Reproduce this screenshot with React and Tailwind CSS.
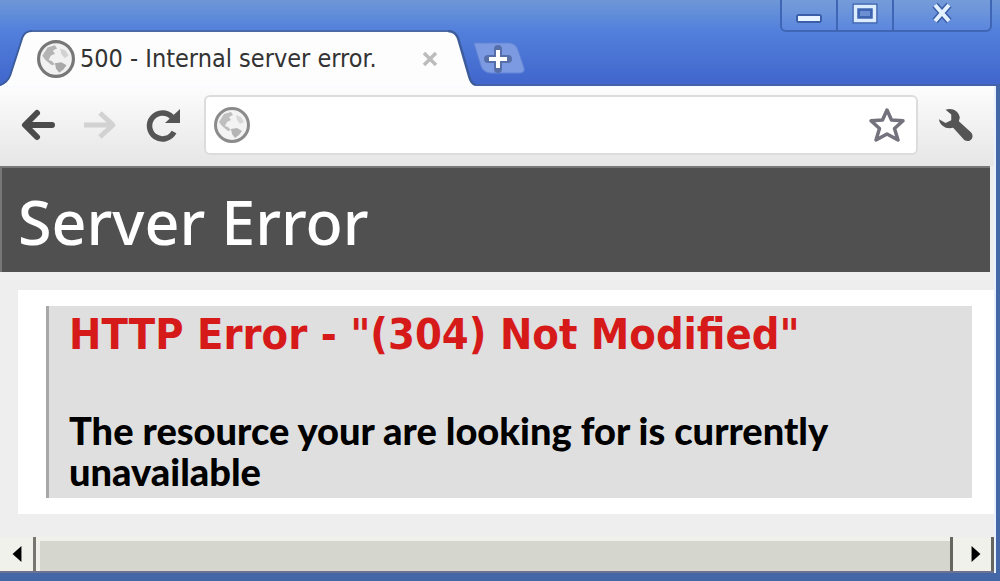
import React from 'react';

// Small globe used for the tab favicon and in the address bar
function GlobeIcon({ className }) {
  return (
    <svg viewBox="0 0 36 36" className={className} aria-hidden="true">
      <circle cx="18" cy="18" r="16.5" fill="#f1f1f1" stroke="#777777" strokeWidth="3" />
      <path
        d="M10 7 L17 5 L19 8 L15 10 L17 13 L13 15 L11 19 L14 20 L17 23 L14 24 L8 19 L5 15 Z"
        fill="#b4b4b4"
      />
      <path d="M22 8 L27 10 L30 15 L26 17 L23 13 Z" fill="#d2d2d2" />
      <path d="M17 22 L23 21 L28 24 L25 28 L21 31 L18 27 Z" fill="#a9a9a9" />
    </svg>
  );
}

function WindowControls() {
  const buttonClass = 'flex items-center justify-center h-full pb-1';

  return (
    <div className="flex h-8 mr-2 rounded-b-md border-2 border-t-0 border-[#3f66b4] divide-x-2 divide-[#3f66b4] bg-white/5">
      <button type="button" aria-label="Minimize" className={`${buttonClass} w-14`}>
        <svg viewBox="0 0 28 24" className="w-7 h-6">
          <rect x="1" y="13" width="26" height="9" rx="3" fill="#3b5ea8" />
          <rect x="3" y="15" width="22" height="5" fill="#e8f4ff" />
        </svg>
      </button>
      <button type="button" aria-label="Maximize" className={`${buttonClass} w-14`}>
        <svg viewBox="0 0 28 24" className="w-7 h-6">
          <rect x="4.5" y="5.5" width="19" height="14" fill="none" stroke="#3b5ea8" strokeWidth="6" />
          <rect x="4.5" y="5.5" width="19" height="14" fill="#3f64b0" stroke="#dcecff" strokeWidth="3.5" />
          <rect x="9" y="10" width="10" height="5" fill="#6b8fd2" />
        </svg>
      </button>
      <button type="button" aria-label="Close" className={`${buttonClass} w-24`}>
        <svg viewBox="0 0 28 24" className="w-7 h-6">
          <path d="M7 4 L21 20 M21 4 L7 20" stroke="#3b5ea8" strokeWidth="7" />
          <path d="M7 4 L21 20 M21 4 L7 20" stroke="#e4f2ff" strokeWidth="4" />
        </svg>
      </button>
    </div>
  );
}

function Tab({ title }) {
  return (
    <div className="flex h-14">
      <svg viewBox="0 0 34 56" className="w-8 h-14 shrink-0" preserveAspectRatio="none" aria-hidden="true">
        <path d="M0 56 C6 54 9 51 11 46 L24 8 Q27 1 34 1 L34 56 Z" fill="#fdfdfe" />
        <path d="M0 55 C6 53 9 50 11 45 L24 7 Q27 1 34 1" fill="none" stroke="#3d5c9c" strokeWidth="2" />
      </svg>
      <div className="flex items-center w-[416px] pl-1 pr-2 border-t-2 border-[#4a6aaa] bg-[#fdfdfe]">
        <GlobeIcon className="w-10 h-10 shrink-0 px-px" />
        <span className="ml-1 text-[25px] text-[#333333] whitespace-nowrap">{title}</span>
        <button type="button" aria-label="Close tab" className="ml-auto">
          <svg viewBox="0 0 20 20" className="w-5 h-5">
            <path d="M4 4 L16 16 M16 4 L4 16" stroke="#bcbcbc" strokeWidth="3.5" />
          </svg>
        </button>
      </div>
      <svg viewBox="0 0 28 56" className="w-7 h-14 shrink-0" aria-hidden="true">
        <path d="M0 1 Q7 1 10 8 L21 46 Q23 54 28 55 L28 56 L0 56 Z" fill="#fdfdfe" />
        <path d="M0 1 Q7 1 10 8 L21 46 Q23 54 28 55" fill="none" stroke="#3d5c9c" strokeWidth="2.5" />
      </svg>
    </div>
  );
}

function TitleBar() {
  return (
    <header className="flex bg-linear-to-b from-[#6e97d6] via-[#5380dc] via-35% to-[#4065cc]">
      <div className="pt-[30px]">
        <Tab title="500 - Internal server error." />
      </div>
      <div className="flex flex-1 items-start justify-between border-b-2 border-[#4562a8]">
        <button type="button" aria-label="New tab" className="-ml-1 mt-[42px]">
          <svg viewBox="0 0 54 32" className="w-[54px] h-8">
            <path d="M2 1 L38 1 Q44 2 46 8 L52 26 Q53 31 48 31 L18 31 Q11 30 9 24 Z" fill="#7b9ae2" stroke="#6384d6" />
            <path d="M26 7 V27 M16 17 H36" stroke="#566fa8" strokeWidth="8" strokeLinecap="round" />
            <path d="M26 8 V26 M17 17 H35" stroke="#ffffff" strokeWidth="4" />
          </svg>
        </button>
        <WindowControls />
      </div>
    </header>
  );
}

function Toolbar() {
  return (
    <nav className="flex items-center gap-3 h-20 pl-4 pr-5 pb-1 border-t-2 border-[#fafbff] bg-linear-to-b from-[#fcfcfc] to-[#e6e6e6]">
      <div className="flex items-center gap-6 mr-3">
        <button type="button" aria-label="Back">
          <svg viewBox="0 0 40 36" className="w-10 h-9">
            <path d="M36 18 H10 M21 6 L9 18 L21 30" fill="none" stroke="#4b4b4b" strokeWidth="6" strokeLinecap="round" strokeLinejoin="round" />
          </svg>
        </button>
        <button type="button" aria-label="Forward" disabled>
          <svg viewBox="0 0 40 36" className="w-10 h-9">
            <path d="M4 18 H30 M20 6 L33 18 L20 30" fill="none" stroke="#d2d2d2" strokeWidth="5" strokeLinejoin="round" />
          </svg>
        </button>
        <button type="button" aria-label="Reload">
          <svg viewBox="0 0 36 36" className="w-9 h-9">
            <path d="M28 10 A13 13 0 1 0 30 25" fill="none" stroke="#555555" strokeWidth="5.5" />
            <path d="M36 2 V16 H21 Z" fill="#555555" />
          </svg>
        </button>
      </div>
      <div className="flex items-center flex-1 h-15 px-2 rounded-md border-2 border-[#dcdcdc] bg-white">
        <GlobeIcon className="w-9 h-9 shrink-0 opacity-85" />
        <input type="text" aria-label="Address" className="flex-1 min-w-0 h-full px-3 text-2xl outline-none" />
        <button type="button" aria-label="Bookmark this page">
          <svg viewBox="0 0 40 40" className="w-10 h-10">
            <path
              d="M19 5 L23.5 15 L35 15.800 L26.500 23.500 L30 35 L19 29 L8 35 L11.500 23.500 L3 15.800 L14.500 15 Z"
              fill="#ffffff"
              stroke="#74727c"
              strokeWidth="3.5"
              strokeLinejoin="round"
            />
          </svg>
        </button>
      </div>
      <button type="button" aria-label="Settings" className="ml-2">
        <svg viewBox="0 0 38 38" className="w-9 h-9">
          <path
            d="M8 3 C14 0 22 4 23 11 L22 15 L35 27 C39 32 34 38 28 35 L16 22 C9 24 2 20 1 13 L8 17 L14 14 L14 8 Z"
            fill="#555555"
          />
        </svg>
      </button>
    </nav>
  );
}

function ErrorPage() {
  return (
    <main className="flex-1 bg-[#eeeeee]">
      <h1 className="mr-1 px-4 pt-4 pb-3 border-t-2 border-l-2 border-[#777777] bg-[#505050] font-['Noto_Sans'] text-[61px] leading-[76px] font-medium text-white">
        Server Error
      </h1>
      <section className="mt-[18px] ml-[18px] mb-5 py-4 pl-7 pr-[22px] bg-white">
        <div className="px-5 pt-[6px] pb-[6px] border-l-3 border-[#a8a8a8] bg-[#dfdfdf]">
          <h2 className="text-[43px] leading-[44px] font-bold text-[#d61a1a]">
            HTTP Error - &quot;(304) Not Modified&quot;
          </h2>
          <p className="mt-[54px] font-['Lato'] text-[38px] leading-[41px] font-black text-black">
            The resource your are looking for is currently unavailable
          </p>
        </div>
      </section>
    </main>
  );
}

function HorizontalScrollbar() {
  return (
    <div className="flex h-9 border-b-2 border-[#6d708f] bg-[#f1f1ec]">
      <button type="button" aria-label="Scroll left" className="flex items-center justify-center w-9 border-r-3 border-[#77776f]">
        <svg viewBox="0 0 12 18" className="w-3 h-4">
          <path d="M11 0 V18 L1 9 Z" fill="#000000" />
        </svg>
      </button>
      <div className="flex-1 mt-1 ml-1 bg-[#d5d6ce]"></div>
      <button type="button" aria-label="Scroll right" className="flex items-center justify-center w-11 pl-2 border-l-3 border-r-3 border-[#66665f]">
        <svg viewBox="0 0 12 18" className="w-3 h-4">
          <path d="M1 0 V18 L11 9 Z" fill="#000000" />
        </svg>
      </button>
    </div>
  );
}

export default function App() {
  return (
    <div className="flex flex-col min-h-screen bg-[#4467a8] font-['DejaVu_Sans_Condensed','DejaVu_Sans',sans-serif]">
      <TitleBar />
      <div className="flex flex-col flex-1 mr-1 mb-2 border-r-2 border-[#e6f0ff] bg-[#eeeeee]">
        <Toolbar />
        <ErrorPage />
        <HorizontalScrollbar />
      </div>
    </div>
  );
}
